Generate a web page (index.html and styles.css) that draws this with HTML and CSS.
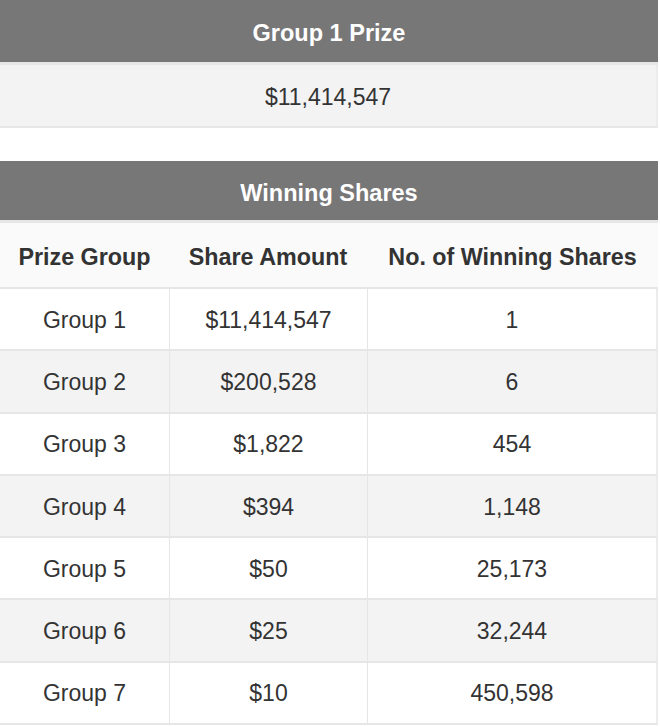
FILE: index.html
```html
<!DOCTYPE html>
<html>
<head>
<meta charset="utf-8">
<link rel="stylesheet" href="styles.css">
</head>
<body>
<table class="tbl prize">
  <thead><tr><th class="title">Group 1 Prize</th></tr></thead>
  <tbody><tr class="alt"><td class="single">$11,414,547</td></tr></tbody>
</table>
<table class="tbl shares">
  <colgroup><col class="c1"><col class="c2"><col class="c3"></colgroup>
  <thead>
    <tr><th class="title" colspan="3">Winning Shares</th></tr>
    <tr class="colhead"><th>Prize Group</th><th>Share Amount</th><th>No. of Winning Shares</th></tr>
  </thead>
  <tbody>
    <tr><td>Group 1</td><td>$11,414,547</td><td>1</td></tr>
    <tr class="alt"><td>Group 2</td><td>$200,528</td><td>6</td></tr>
    <tr><td>Group 3</td><td>$1,822</td><td>454</td></tr>
    <tr class="alt"><td>Group 4</td><td>$394</td><td>1,148</td></tr>
    <tr><td>Group 5</td><td>$50</td><td>25,173</td></tr>
    <tr class="alt"><td>Group 6</td><td>$25</td><td>32,244</td></tr>
    <tr><td>Group 7</td><td>$10</td><td>450,598</td></tr>
  </tbody>
</table>
</body>
</html>
```
FILE: styles.css
```css
html, body {
  margin: 0;
  padding: 0;
  background: #fff;
}
body {
  font-family: "Liberation Sans", Arial, sans-serif;
  color: #333;
  font-size: 23px;
}
.tbl {
  width: 658px;
  border-collapse: separate;
  border-spacing: 0;
  table-layout: fixed;
}
.tbl th, .tbl td {
  padding: 0;
  text-align: center;
  vertical-align: middle;
}
.title {
  background: #777;
  color: #fff;
  font-weight: bold;
  font-size: 23.5px;
  height: 62px;
  box-sizing: border-box;
  padding-top: 4px !important;
  border-bottom: 3px solid #e6e6e6;
}
.prize .title {
  height: 65px;
}
.single {
  height: 63px;
  box-sizing: border-box;
  padding-top: 3px !important;
  background: #f3f3f3;
  border-bottom: 2px solid #e6e6e6;
  border-right: 2px solid #ececec;
}
.prize {
  margin-bottom: 33px;
}
.shares .title {
  height: 62px;
  padding-top: 6px !important;
  border-bottom: 3px solid #e6e6e6;
}
.colhead th {
  height: 66px;
  box-sizing: border-box;
  padding-top: 4px !important;
  background: #fafafa;
  color: #333;
  font-weight: bold;
  font-size: 23.3px;
  border-bottom: 2px solid #e6e6e6;
}
.c1 { width: 169px; }
.c2 { width: 198px; }
.shares tbody td {
  height: 62.3px;
  box-sizing: border-box;
  padding-top: 2px !important;
  background: #fff;
  border-bottom: 2px solid #e6e6e6;
  border-left: 1px solid #e6e6e6;
}
.shares tbody td:first-child {
  border-left: none;
}
.shares tbody td:last-child {
  border-right: 2px solid #ececec;
}
.shares tbody tr.alt td {
  background: #f3f3f3;
}
```
